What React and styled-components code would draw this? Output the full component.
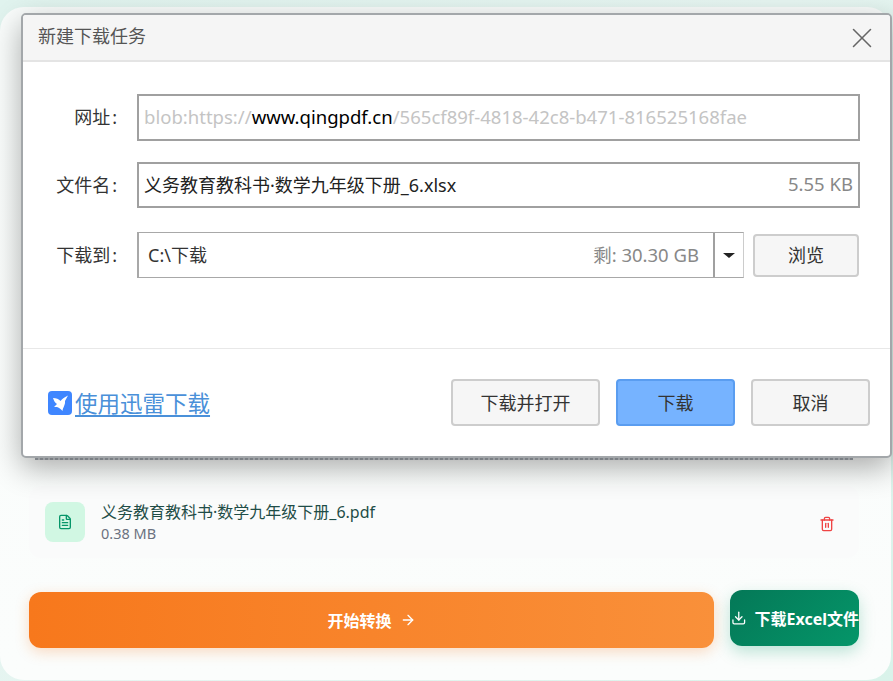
import React from "react";
import styled, { createGlobalStyle } from "styled-components";
import { FileText, Trash2, ArrowRight, Download, X } from "lucide-react";

const Global = createGlobalStyle`
  html, body { margin: 0; padding: 0; background: #e2f4ef; }
  * { box-sizing: border-box; }
  body { font-family: "Noto Sans", "Noto Sans CJK SC", sans-serif; overflow: hidden; }
`;

const Page = styled.div`
  position: relative;
  width: 893px;
  height: 681px;
  overflow: hidden;
  background: linear-gradient(135deg, #e0f3ee 0%, #e6f5f1 50%, #d9f3ea 100%);
  padding: 7px 2px 1px 0;
`;

const Card = styled.main`
  height: 673px;
  background: linear-gradient(180deg, #f9fcfb 0%, #fbfdfc 100%);
  border-radius: 24px;
  padding: 0 32px 32px 29px;
  display: flex;
  flex-direction: column;
`;

const DropZone = styled.div`
  height: 453px;
  margin: 0 6px 0 6px;
  background: repeating-linear-gradient(90deg, #a0a6ad 0 3px, #c9cdd1 3px 5px) bottom / 100% 2px no-repeat;
`;

const FileRow = styled.div`
  height: 72px;
  margin-top: 26px;
  padding: 0 16px;
  display: flex;
  align-items: center;
  gap: 16px;
  background: #fafbfb;
  border-radius: 12px;
`;

const FileBadge = styled.div`
  width: 40px;
  height: 40px;
  border-radius: 8px;
  background: #d1f7e3;
  color: #059669;
  display: flex;
  align-items: center;
  justify-content: center;
`;

const FileInfo = styled.div`
  flex: 1;
  display: flex;
  flex-direction: column;
`;

const FileName = styled.div`
  font-size: 16px;
  line-height: 22px;
  color: #1f4d47;
`;

const FileSize = styled.div`
  font-size: 14.5px;
  line-height: 20px;
  color: #6b7280;
`;

const TrashButton = styled.div`
  color: #ef4444;
  display: flex;
  margin: 3px 8px 0 0;
`;

const Actions = styled.div`
  margin-top: 32px;
  display: flex;
  gap: 16px;
  align-items: flex-start;
`;

const StartButton = styled.div`
  width: 685px;
  height: 56px;
  margin-top: 2px;
  border-radius: 12px;
  background: linear-gradient(90deg, #f7781c, #f9903a);
  box-shadow: 0 4px 14px rgba(249, 115, 22, 0.25);
  color: #fff;
  font-weight: 700;
  font-size: 16px;
  display: flex;
  align-items: center;
  justify-content: center;
  gap: 8px;
`;

const ExcelButton = styled.div`
  width: 129px;
  height: 56px;
  border-radius: 12px;
  background: linear-gradient(135deg, #047857, #059669);
  box-shadow: 0 6px 16px rgba(5, 150, 105, 0.25);
  color: #fff;
  font-weight: 700;
  font-size: 16px;
  display: flex;
  align-items: center;
  gap: 8px;
  padding-left: 1px;
  white-space: nowrap;
`;

const Dialog = styled.section`
  position: absolute;
  left: 21px;
  top: 13px;
  width: 871px;
  height: 445px;
  background: #fff;
  border: 2px solid #a3a7aa;
  border-radius: 5px;
  box-shadow: 0 10px 30px rgba(0, 0, 0, 0.32);
  display: flex;
  flex-direction: column;
  overflow: hidden;
`;

const TitleBar = styled.header`
  height: 47px;
  flex: none;
  padding: 0 11px 0 15px;
  background: #f5f5f5;
  border-bottom: 2px solid #e4e4e4;
  display: flex;
  align-items: center;
  justify-content: space-between;
  font-size: 18px;
  color: #555;
`;

const TitleText = styled.span`
  padding-bottom: 5px;
`;

const Close = styled.div`
  color: #666;
  display: flex;
`;

const Form = styled.div`
  height: 287px;
  flex: none;
  padding: 32px 30px 0 0;
  border-bottom: 1px solid #e8e8e8;
  display: flex;
  flex-direction: column;
`;

const FormRow = styled.div`
  display: flex;
  align-items: center;
  margin-top: ${p => p.$gap || 0}px;
`;

const Label = styled.div`
  width: 94px;
  margin-right: 20px;
  padding-bottom: 3px;
  text-align: right;
  font-size: 18px;
  color: #333;
  flex: none;
`;

const Colon = styled.span`
  margin-left: 2px;
`;

const Field = styled.div`
  flex: 1;
  height: ${p => p.$h}px;
  border: 2px solid #a0a0a0;
  padding: 0 5px 3px;
  display: flex;
  align-items: center;
  justify-content: space-between;
  font-size: 18px;
  white-space: nowrap;
  color: #222;
`;

const UrlText = styled.span`
  font-size: 18.55px;
`;

const Faint = styled.span`
  color: #c4c4c4;
`;

const Strong = styled.span`
  color: #000;
`;

const Side = styled.span`
  color: #888;
  font-size: 18.5px;
`;

const PathField = styled.div`
  width: 607px;
  height: 46px;
  flex: none;
  display: flex;
  border: 1px solid #a8a8a8;
  border-left-width: 2px;
  border-right-color: #ccc;
`;

const PathValue = styled.div`
  flex: 1;
  padding: 0 14px 3px 9px;
  display: flex;
  align-items: center;
  justify-content: space-between;
  font-size: 18px;
  color: #333;
  border-right: 2px solid #a0a0a0;
`;

const Caret = styled.div`
  width: 28px;
  display: flex;
  align-items: center;
  justify-content: center;
  &::after {
    content: "";
    border-left: 6px solid transparent;
    border-right: 6px solid transparent;
    border-top: 5px solid #222;
  }
`;

const Btn = styled.div`
  width: ${p => p.$w}px;
  height: ${p => p.$h || 47}px;
  flex: none;
  border-radius: 4px;
  border: 2px solid ${p => (p.$primary ? "#5a9df0" : "#cdcdcd")};
  background: ${p => (p.$primary ? "#76b3ff" : "#f6f6f6")};
  display: flex;
  align-items: center;
  justify-content: center;
  padding-bottom: 2px;
  font-size: 18px;
  color: #333;
`;

const BrowseBtn = styled(Btn)`
  margin-left: 9px;
`;

const Footer = styled.footer`
  flex: 1;
  padding: 0 20px 0 25px;
  display: flex;
  align-items: center;
  gap: 16px;
`;

const Thunder = styled.a`
  flex: 1;
  display: flex;
  align-items: center;
  gap: 3px;
  color: #4a90d9;
  font-size: 22.5px;
`;

const ThunderLabel = styled.span`
  text-decoration: underline;
  text-underline-offset: 3px;
`;

const Bird = () => (
  <svg width="24" height="24" viewBox="0 0 24 24" aria-hidden="true">
    <rect width="24" height="24" rx="4" fill="#3f86ff" />
    <path d="M5 7C8 7 11 8 12.500 10C14 8 17 6 20 4.500L17 10C17.500 14 15 16 14.500 20C13 18 11.500 17 9 16L6 16L9 13C7 12 6 10 5 7Z" fill="#fff" />
  </svg>
);

export default function App() {
  return (
    <Page>
      <Global />
      <Card>
        <DropZone />
        <FileRow>
          <FileBadge><FileText size={16} /></FileBadge>
          <FileInfo>
            <FileName>义务教育教科书·数学九年级下册_6.pdf</FileName>
            <FileSize>0.38 MB</FileSize>
          </FileInfo>
          <TrashButton><Trash2 size={16} /></TrashButton>
        </FileRow>
        <Actions>
          <StartButton>开始转换 <ArrowRight size={16} /></StartButton>
          <ExcelButton><Download size={16} />下载Excel文件</ExcelButton>
        </Actions>
      </Card>
      <Dialog>
        <TitleBar>
          <TitleText>新建下载任务</TitleText>
          <Close><X size={34} strokeWidth={1.1} /></Close>
        </TitleBar>
        <Form>
          <FormRow>
            <Label>网址<Colon>:</Colon></Label>
            <Field $h={47}>
              <UrlText><Faint>blob:https://</Faint><Strong>www.qingpdf.cn</Strong><Faint>/565cf89f-4818-42c8-b471-816525168fae</Faint></UrlText>
            </Field>
          </FormRow>
          <FormRow $gap={21}>
            <Label>文件名<Colon>:</Colon></Label>
            <Field $h={46}>
              <span>义务教育教科书·数学九年级下册_6.xlsx</span>
              <Side>5.55 KB</Side>
            </Field>
          </FormRow>
          <FormRow $gap={24}>
            <Label>下载到<Colon>:</Colon></Label>
            <PathField>
              <PathValue>
                <span>C:\下载</span>
                <Side>剩: 30.30 GB</Side>
              </PathValue>
              <Caret />
            </PathField>
            <BrowseBtn $w={106} $h={43}>浏览</BrowseBtn>
          </FormRow>
        </Form>
        <Footer>
          <Thunder><Bird /><ThunderLabel>使用迅雷下载</ThunderLabel></Thunder>
          <Btn $w={149}>下载并打开</Btn>
          <Btn $w={119} $primary>下载</Btn>
          <Btn $w={119}>取消</Btn>
        </Footer>
      </Dialog>
    </Page>
  );
}
